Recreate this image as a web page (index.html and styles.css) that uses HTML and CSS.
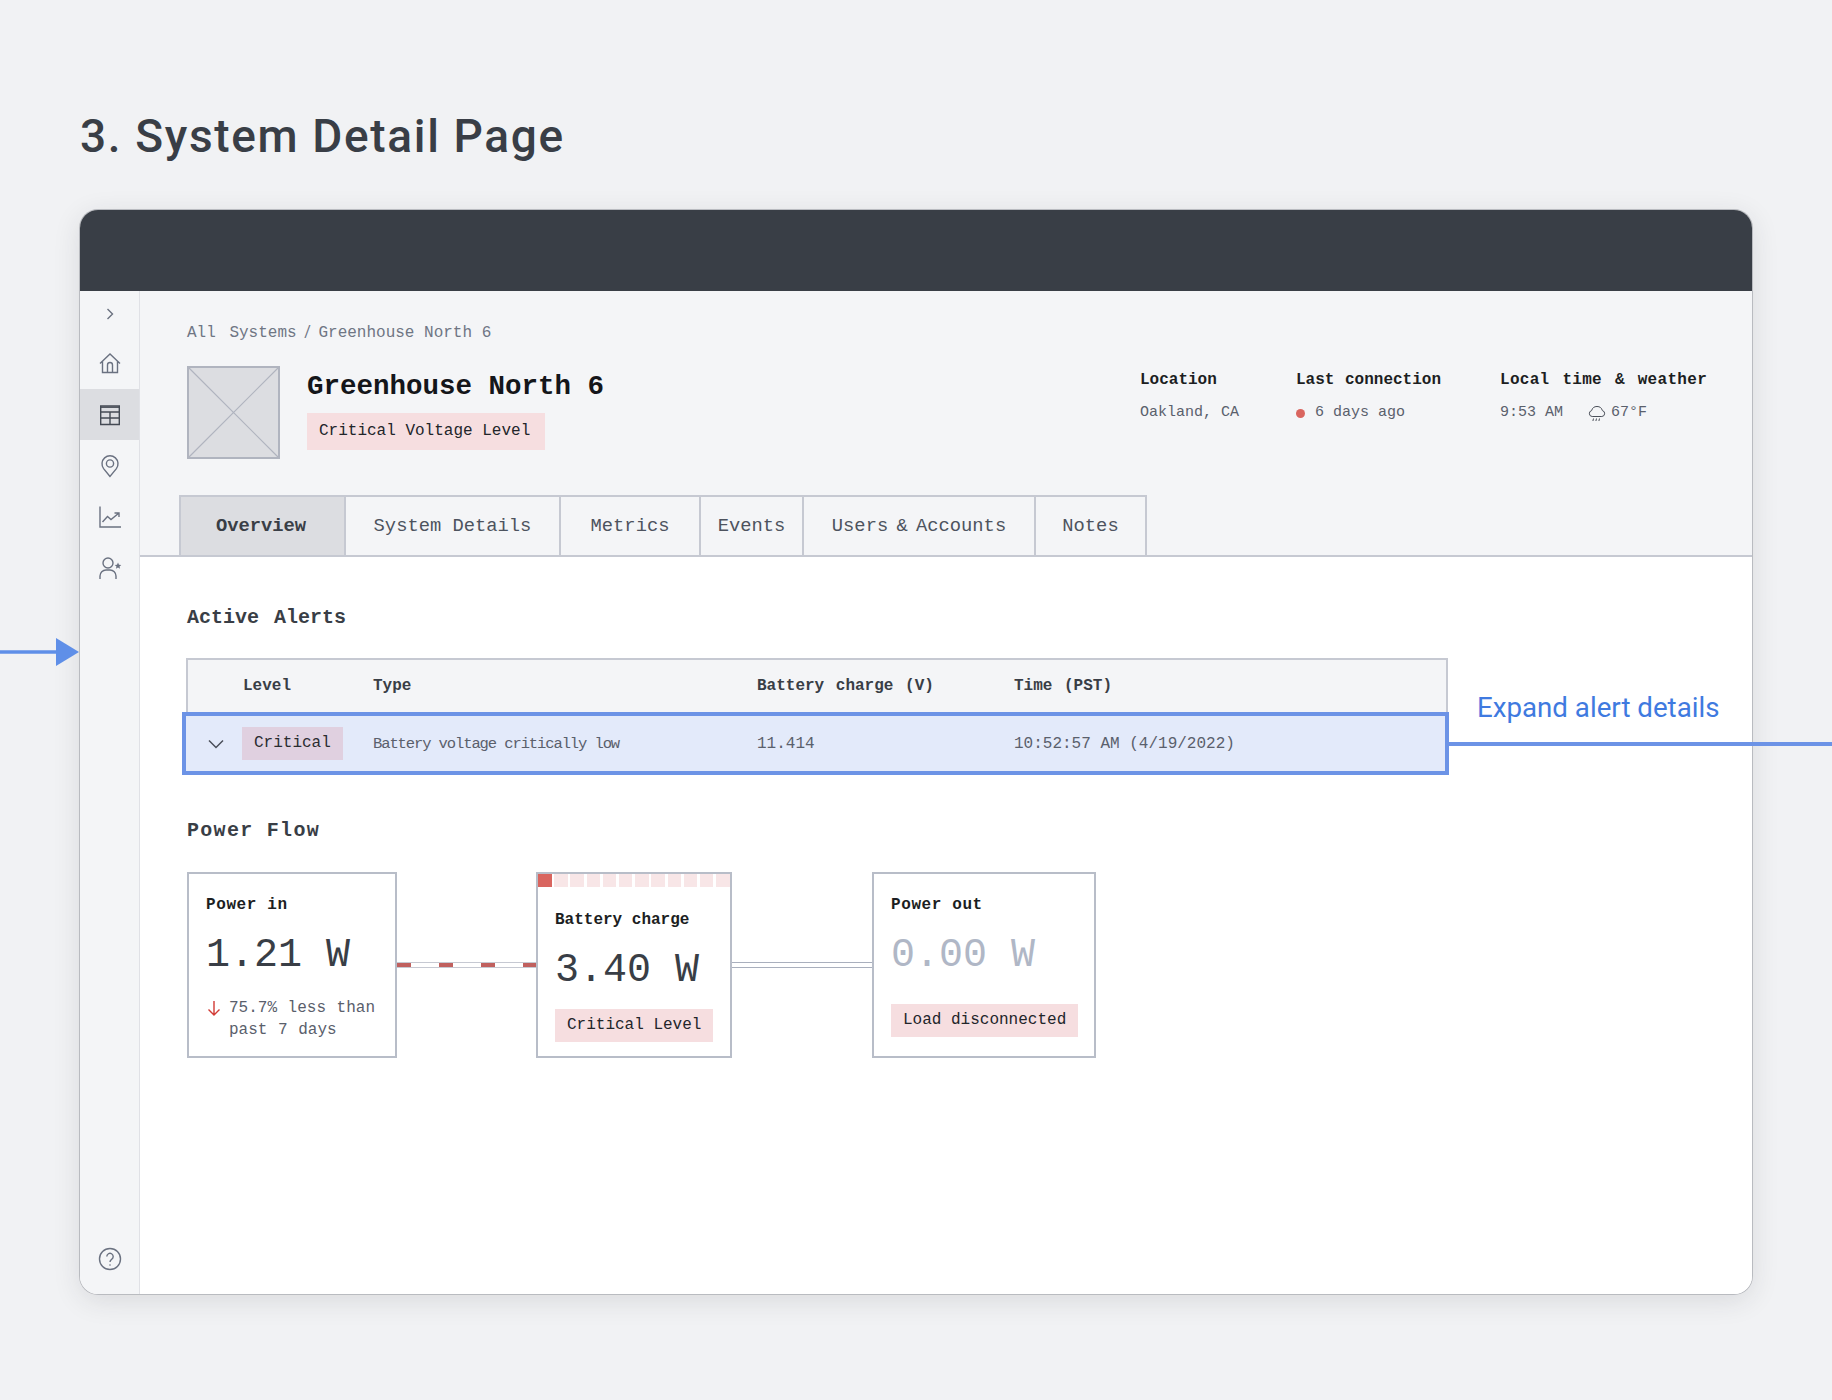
FILE: index.html
```html
<!DOCTYPE html>
<html lang="en">
<head>
<meta charset="utf-8">
<title>System Detail Page</title>
<link rel="stylesheet" href="styles.css">
</head>
<body>
<h1 class="page-title">3. System Detail Page</h1>
<div class="frame">
  <div class="topbar"></div>
  <div class="body">
    <nav class="sidebar">
      <div class="nav-item nav-toggle"><svg class="icon" viewBox="0 0 24 24"><path d="M9.500 7l5 5-5 5"/></svg></div>
      <div class="nav-item nav-home"><svg class="icon" viewBox="0 0 24 24"><path d="M2 12.500L12 3l10 9.500M4.500 10.500V21.500h15V10.500M9.500 21.500v-7.500a2.500 2.500 0 0 1 5 0v7.500"/></svg></div>
      <div class="nav-item active"><svg class="icon dark" viewBox="0 0 24 24"><path d="M2.700 3h18.600v18.500H2.700zM2.700 9h18.600M2.700 15h18.600M12 9v12.500"/><path d="M2.700 4.200h18.600" /></svg></div>
      <div class="nav-item"><svg class="icon" viewBox="0 0 24 24"><path d="M12 22.500L5.600 14.600A8 8 0 1 1 18.400 14.600z"/><circle cx="12" cy="9.500" r="3.600"/></svg></div>
      <div class="nav-item"><svg class="icon" viewBox="0 0 24 24"><path d="M2 1.500V22h21M4.500 17l5-5.500 3.500 3 8-6.500M16.500 8H21v4"/></svg></div>
      <div class="nav-item"><svg class="icon" viewBox="0 0 24 24"><circle cx="10" cy="7" r="5"/><path d="M2 23v-3a6 6 0 0 1 6-6h4a6 6 0 0 1 6 6v3"/><path class="solid" d="M20 6.500l1 2.200 2.300.2-1.800 1.500.6 2.300-2.100-1.200-2.100 1.200.6-2.300-1.800-1.500 2.300-.2z"/></svg></div>
      <div class="nav-item nav-help"><svg class="icon" viewBox="0 0 24 24"><circle cx="12" cy="12" r="10.500"/><path d="M8.800 9.500a3.200 3.200 0 1 1 4.800 2.800c-1 .6-1.600 1.200-1.600 2.700"/><circle class="solid" cx="12" cy="18" r=".8"/></svg></div>
    </nav>
    <main class="main">
      <section class="head">
        <div class="crumb"><span class="crumb-root">All Systems</span> <span class="slash">/</span> Greenhouse North 6</div>
        <div class="head-row">
          <svg class="thumb" viewBox="0 0 93 93"><rect x="1" y="1" width="91" height="91"/><path d="M1 1l91 91M92 1L1 92"/></svg>
          <div class="head-title">
            <div class="name">Greenhouse North 6</div>
            <div class="tag tag-voltage">Critical Voltage Level</div>
          </div>
          <div class="meta">
            <div class="meta-col meta-loc">
              <div class="meta-label">Location</div>
              <div class="meta-value">Oakland, CA</div>
            </div>
            <div class="meta-col meta-conn">
              <div class="meta-label">Last connection</div>
              <div class="meta-value"><span class="dot"></span>6 days ago</div>
            </div>
            <div class="meta-col meta-local">
              <div class="meta-label meta-label-wide">Local time &amp; weather</div>
              <div class="meta-value">9:53 AM<svg class="rain" viewBox="0 0 18 17"><path d="M5 11.500H4.200a3 3 0 0 1-.6-5.900 5.600 5.600 0 0 1 10.800 0 3 3 0 0 1-.6 5.900z"/><path d="M5.500 13.500l-.6 2.500M8.500 13.500l-.6 2.500M11.500 13.500l-.6 2.500"/></svg>67°F</div>
            </div>
          </div>
        </div>
        <div class="tabs">
          <div class="tab tab-overview active">Overview</div>
          <div class="tab tab-details">System Details</div>
          <div class="tab tab-metrics">Metrics</div>
          <div class="tab tab-events">Events</div>
          <div class="tab tab-users">Users &amp; Accounts</div>
          <div class="tab tab-notes">Notes</div>
        </div>
      </section>
      <section class="content">
        <h2 class="section-title alerts-title">Active Alerts</h2>
        <div class="table">
          <div class="table-row table-head">
            <span></span><span>Level</span><span>Type</span><span>Battery charge (V)</span><span>Time (PST)</span>
          </div>
          <div class="table-row table-alert">
            <span class="chev"><svg viewBox="0 0 16 10"><path d="M1 1.500l7 7 7-7"/></svg></span>
            <span><span class="tag-critical">Critical</span></span>
            <span class="alert-type">Battery voltage critically low</span>
            <span>11.414</span>
            <span>10:52:57 AM (4/19/2022)</span>
          </div>
        </div>
        <h2 class="section-title flow-title">Power Flow</h2>
        <div class="flow">
          <div class="card card-in">
            <div class="card-title">Power in</div>
            <div class="card-value">1.21 W</div>
            <div class="delta">
              <svg class="delta-arrow" viewBox="0 0 14 16"><path d="M7 1v14M1.500 9.500L7 15l5.500-5.500"/></svg>
              <span>75.7% less than past 7 days</span>
            </div>
          </div>
          <div class="link link-alert"></div>
          <div class="card card-battery">
            <div class="segments">
              <i class="seg on"></i><i class="seg"></i><i class="seg"></i><i class="seg"></i><i class="seg"></i><i class="seg"></i><i class="seg"></i><i class="seg"></i><i class="seg"></i><i class="seg"></i><i class="seg"></i><i class="seg"></i>
            </div>
            <div class="card-title">Battery charge</div>
            <div class="card-value">3.40 W</div>
            <div class="tag tag-card">Critical Level</div>
          </div>
          <div class="link link-idle"></div>
          <div class="card card-out">
            <div class="card-title">Power out</div>
            <div class="card-value muted">0.00 W</div>
            <div class="tag tag-card tag-load">Load disconnected</div>
          </div>
        </div>
      </section>
    </main>
  </div>
</div>
<svg class="arrow-in" viewBox="0 0 80 28"><path d="M0 12.200h57v3.600H0z"/><path d="M56 0l23 14-23 14z"/></svg>
<div class="note">Expand alert details</div>
<div class="note-line"></div>
</body>
</html>
```

FILE: styles.css
```css
* { box-sizing: border-box; }
html, body { margin: 0; height: 1400px; overflow: hidden; }
body {
  position: relative;
  background: #f1f2f4;
  padding: 110px 0 0 80px;
  font-family: "Liberation Mono", "DejaVu Sans Mono", monospace;
  font-size: 16px;
  color: #1c1e22;
}
.page-title {
  margin: 0 0 50px;
  height: 50px;
  line-height: 52px;
  font-family: Roboto, "Liberation Sans", sans-serif;
  font-size: 46px;
  font-weight: 500;
  letter-spacing: 1.650px;
  color: #393e46;
}
.frame {
  width: 1672px;
  height: 1084px;
  border-radius: 18px;
  overflow: hidden;
  background: #fff;
  box-shadow: 0 0 0 1px #b9bbc0, 0 6px 28px rgba(40, 44, 52, .12);
  display: flex;
  flex-direction: column;
}
.topbar { height: 81px; background: #393e46; flex: none; }
.body { flex: 1; display: flex; min-height: 0; }

.sidebar {
  width: 60px;
  flex: none;
  background: #f4f5f7;
  border-right: 1px solid #e0e1e6;
  display: flex;
  flex-direction: column;
}
.nav-item {
  height: 51px;
  display: flex;
  align-items: center;
  justify-content: center;
  flex: none;
}
.nav-toggle { height: 46px; }
.nav-home { height: 52px; }
.nav-item.active { background: #dcdde1; }
.nav-help { margin-top: auto; margin-bottom: 10px; }
.icon {
  width: 24px;
  height: 24px;
  fill: none;
  stroke: #6a7180;
  stroke-width: 1.400;
}
.icon.dark { stroke: #444a54; }
.icon .solid { fill: #6a7180; stroke: none; }

.main { flex: 1; min-width: 0; display: flex; flex-direction: column; }
.head {
  background: #f4f5f7;
  padding: 32px 47px 0;
  border-bottom: 2px solid #c6c9d2;
  flex: none;
}
.crumb { height: 20px; line-height: 20px; color: #6f7684; white-space: nowrap; }
.crumb-root { word-spacing: 4px; }
.slash { font-family: Roboto, sans-serif; line-height: 0; margin: 0 -2px; }
.head-row { display: flex; margin-top: 23px; height: 93px; }
.thumb { width: 93px; height: 93px; flex: none; }
.thumb rect { fill: #dcdde1; stroke: #b0b4bf; stroke-width: 2; }
.thumb path { fill: none; stroke: #b0b4bf; stroke-width: 1.200; }
.head-title { margin-left: 27px; padding-top: 4px; }
.name { font-size: 27.500px; line-height: 34px; font-weight: 700; color: #14161a; white-space: nowrap; }
.tag {
  display: inline-block;
  background: #f6dee0;
  color: #22252a;
  line-height: 37px;
  height: 37px;
  padding: 0 12px;
  white-space: nowrap;
}
.tag-voltage { margin-top: 9px; width: 238px; }
.meta { margin-left: auto; display: flex; padding-top: 4px; }
.meta-col { width: 204px; }
.meta-loc { width: 156px; }
.meta-local { width: 205px; }
.meta-label { line-height: 20px; font-weight: 700; color: #1c1e22; white-space: nowrap; word-spacing: 1px; }
.meta-label-wide { word-spacing: 3px; letter-spacing: .3px; }
.meta-value { margin-top: 13px; line-height: 20px; font-size: 15px; color: #5a606c; display: flex; align-items: center; white-space: pre; }
.dot { width: 9px; height: 9px; border-radius: 50%; background: #d9655f; margin-right: 10px; }
.rain { width: 18px; height: 17px; margin: 0 5px 0 25px; fill: none; stroke: #4a4f59; stroke-width: 1; flex: none; }

.tabs { display: flex; margin: 36px 0 -2px -8px; height: 62px; }
.tab {
  border: 2px solid #c6c9d2;
  border-left-width: 0;
  display: flex;
  align-items: center;
  justify-content: center;
  font-size: 18.800px;
  color: #4d535e;
  padding-bottom: 1px;
  white-space: nowrap;
}
.tab.active { background: #dcdde1; font-weight: 700; color: #393e46; border-left-width: 2px; }
.tab-overview { width: 167px; padding-right: 3px; }
.tab-details { width: 215px; }
.tab-metrics { width: 140px; }
.tab-events { width: 103px; }
.tab-users { width: 232px; word-spacing: -3px; }
.tab-notes { width: 111px; }

.content { flex: 1; background: #fff; padding: 49px 47px 0; position: relative; }
.section-title { margin: 0; font-size: 20px; line-height: 24px; font-weight: 700; color: #393e46; }
.alerts-title { word-spacing: 3px; }
.table {
  margin: 28px 0 0 -1px;
  width: 1262px;
  border: 2px solid #c6c9d2;
  border-bottom: 0;
  background: #f4f5f7;
}
.table-row {
  display: grid;
  grid-template-columns: 55px 130px 384px 257px 1fr;
  align-items: center;
  color: #5a606c;
}
.table-head { height: 52px; font-weight: 700; color: #393e46; word-spacing: 2px; }
.table-alert {
  height: 63px;
  margin: 0 -3px 0 -6px;
  background: #e3eafa;
  border: 4px solid #6c93e6;
  grid-template-columns: 57px 130px 384px 257px 1fr;
}
.chev { display: flex; justify-content: center; padding-left: 2px; }
.chev svg { width: 16px; height: 10px; fill: none; stroke: #4a4f59; stroke-width: 1.500; }
.tag-critical {
  display: inline-block;
  background: #e0d0e0;
  color: #2a2c31;
  line-height: 33px;
  height: 33px;
  padding: 0 12px;
  margin-left: -1px;
}
.alert-type { font-size: 15.500px; letter-spacing: -1.100px; }
.flow-title { margin-top: 44px; letter-spacing: 1.300px; }
.flow { display: flex; margin-top: 29px; align-items: flex-start; }
.card {
  height: 186px;
  flex: none;
  border: 2px solid #b8bdc8;
  background: #fff;
  padding: 21px 17px 0;
}
.card-in { width: 210px; }
.card-battery { width: 196px; padding-top: 0; }
.card-out { width: 224px; }
.card-title { line-height: 20px; font-weight: 700; color: #1c1e22; white-space: nowrap; }
.card-in .card-title, .card-out .card-title { letter-spacing: .6px; }
.card-value {
  margin-top: 17px;
  font-size: 40px;
  line-height: 48px;
  color: #393e46;
  white-space: nowrap;
}
.card-value.muted { color: #b0b7c6; }
.delta { display: flex; margin-top: 17px; line-height: 22px; color: #5a606c; word-spacing: 1px; }
.delta-arrow {
  width: 14px;
  height: 16px;
  margin: 3px 8px 0 1px;
  flex: none;
  fill: none;
  stroke: #d23b35;
  stroke-width: 1.400;
}
.segments { display: flex; gap: 2.700px; height: 13px; margin: 0 -17px 23px; }
.seg { width: 13.500px; flex: none; background: #f8e6e7; }
.seg.on { background: #d9655f; }
.tag-card { height: 33px; line-height: 33px; margin-top: 14px; }
.tag-load { margin-top: 24px; }
.link {
  height: 6px;
  margin-top: 90px;
  flex: none;
  background: #fff;
  border-top: 1.500px solid #a9afbd;
  border-bottom: 1.500px solid #a9afbd;
}
.link-alert {
  width: 139px;
  background: repeating-linear-gradient(90deg, #c0605e 0 14px, #fff 14px 42px);
  border-color: #c6c9d2;
}
.link-idle { width: 140px; }

.arrow-in { position: absolute; left: 0; top: 638px; width: 80px; height: 28px; fill: #5f8fe8; }
.note {
  position: absolute;
  left: 1477px;
  top: 690px;
  line-height: 36px;
  font-family: Roboto, "Liberation Sans", sans-serif;
  font-size: 27.700px;
  color: #3f7ae0;
}
.note-line { position: absolute; left: 1449px; right: 0; top: 742px; height: 4px; background: #6c93e6; }
```
